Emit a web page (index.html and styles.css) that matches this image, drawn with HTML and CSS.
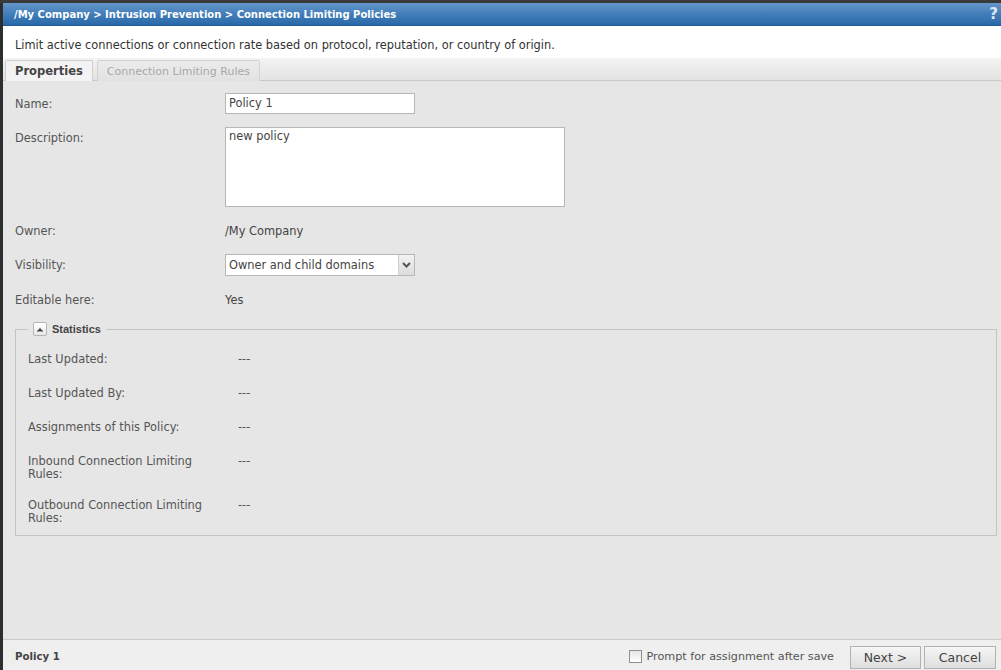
FILE: index.html
```html
<!DOCTYPE html>
<html>
<head>
<meta charset="utf-8">
<link rel="stylesheet" href="styles.css">
</head>
<body>
<div class="frame">
  <div class="topstrip"></div>
  <div class="dialog">
    <div class="titlebar">
      <span class="title">/My Company &gt; Intrusion Prevention &gt; Connection Limiting Policies</span>
      <span class="help">?</span>
    </div>
    <div class="intro">Limit active connections or connection rate based on protocol, reputation, or country of origin.</div>
    <div class="tabs">
      <div class="tab active">Properties</div>
      <div class="tab">Connection Limiting Rules</div>
    </div>
    <div class="content">
      <div class="form">
        <div class="row h21">
          <div class="label">Name:</div>
          <div class="input">Policy 1</div>
        </div>
        <div class="row">
          <div class="label">Description:</div>
          <div class="textarea">new policy</div>
        </div>
        <div class="row h21">
          <div class="label">Owner:</div>
          <div class="value">/My Company</div>
        </div>
        <div class="row h22">
          <div class="label">Visibility:</div>
          <div class="select">
            <span class="select-text">Owner and child domains</span>
            <span class="select-btn">
              <svg width="9" height="6" viewBox="0 0 9 6"><path d="M1 1 L4.5 4.5 L8 1" fill="none" stroke="#555" stroke-width="2"/></svg>
            </span>
          </div>
        </div>
        <div class="row h21">
          <div class="label">Editable here:</div>
          <div class="value">Yes</div>
        </div>
      </div>
      <fieldset class="stats">
        <legend class="legend">
          <span class="toggle"><svg width="8" height="5" viewBox="0 0 8 5"><path d="M0.5 4.5 L4 1 L7.5 4.5 Z" fill="#444"/></svg></span>
          <span class="legend-text">Statistics</span>
        </legend>
        <div class="stat-row">
          <div class="stat-label">Last Updated:</div>
          <div class="stat-value">---</div>
        </div>
        <div class="stat-row">
          <div class="stat-label">Last Updated By:</div>
          <div class="stat-value">---</div>
        </div>
        <div class="stat-row">
          <div class="stat-label">Assignments of this Policy:</div>
          <div class="stat-value">---</div>
        </div>
        <div class="stat-row">
          <div class="stat-label">Inbound Connection Limiting Rules:</div>
          <div class="stat-value">---</div>
        </div>
        <div class="stat-row">
          <div class="stat-label">Outbound Connection Limiting Rules:</div>
          <div class="stat-value">---</div>
        </div>
      </fieldset>
    </div>
    <div class="footer">
      <div class="footer-name">Policy 1</div>
      <label class="prompt"><span class="checkbox"></span>Prompt for assignment after save</label>
      <div class="btn next">Next &gt;</div>
      <div class="btn cancel">Cancel</div>
    </div>
  </div>
</div>
</body>
</html>
```

FILE: styles.css
```css
* { box-sizing: border-box; }
html, body {
  margin: 0;
  padding: 0;
  height: 100%;
  overflow: hidden;
}
body {
  background: #2e2e2e;
  font-family: "DejaVu Sans", Verdana, sans-serif;
  font-size: 11.4px;
  color: #444;
}
.frame {
  height: 670px;
  display: flex;
  flex-direction: column;
}
.topstrip {
  height: 3px;
  background: #3a3a3a;
  flex: none;
}
.dialog {
  flex: 1;
  margin-left: 3px;
  display: flex;
  flex-direction: column;
  background: #e6e6e6;
  min-height: 0;
}
.titlebar {
  height: 23px;
  flex: none;
  background: linear-gradient(#6596c9, #3f7bb8 55%, #2a69a8);
  display: flex;
  align-items: center;
  justify-content: space-between;
  padding: 0 3px 0 11px;
  border-bottom: 1px solid #1f5a94;
}
.title {
  color: #fff;
  font-weight: bold;
  font-size: 10px;
}
.help {
  color: #dfe8f2;
  font-weight: bold;
  font-size: 15px;
  line-height: 1;
}
.intro {
  height: 32px;
  flex: none;
  background: #fff;
  padding: 12px 0 0 12px;
  color: #333;
  line-height: 14px;
}
.tabs {
  height: 23px;
  flex: none;
  background: linear-gradient(#f3f3f3, #e3e3e3);
  border-bottom: 1px solid #c9c9c9;
  display: flex;
  align-items: flex-end;
  padding-left: 2px;
  gap: 4px;
}
.tab {
  height: 21px;
  margin-bottom: -1px;
  padding: 0 9px;
  display: flex;
  align-items: center;
  border: 1px solid #d2d2d2;
  border-bottom: none;
  border-radius: 2px 2px 0 0;
  background: linear-gradient(#ececec, #e2e2e2);
  color: #a8a8a8;
  font-size: 11px;
}
.tab.active {
  background: #f3f3f3;
  border-color: #cfcfcf;
  color: #444;
  font-weight: bold;
  font-size: 11.5px;
}
.content {
  flex: 1;
  padding: 12px 4px 0 12px;
  min-height: 0;
}
.form {
  display: flex;
  flex-direction: column;
  gap: 13px;
}
.row {
  display: grid;
  grid-template-columns: 210px auto;
  align-items: start;
}
.label {
  color: #555;
  line-height: 20px;
  padding-top: 1px;
}
.h22 .label { line-height: 22px; padding-top: 0; }
.value {
  line-height: 20px;
  padding-top: 1px;
  color: #444;
}
.input {
  width: 190px;
  height: 21px;
  background: #fff;
  border: 1px solid #b7b7b7;
  padding: 0 3px;
  line-height: 19px;
  color: #444;
}
.textarea {
  width: 340px;
  height: 80px;
  background: #fff;
  border: 1px solid #b7b7b7;
  padding: 1px 3px;
  line-height: 15px;
  color: #444;
}
.select {
  width: 190px;
  height: 22px;
  background: #fff;
  border: 1px solid #b7b7b7;
  display: flex;
  align-items: stretch;
}
.select-text {
  flex: 1;
  padding-left: 3px;
  line-height: 20px;
  color: #444;
}
.select-btn {
  width: 16px;
  border-left: 1px solid #cfcfcf;
  background: linear-gradient(#f2f2f2, #dcdcdc);
  display: flex;
  align-items: center;
  justify-content: center;
}
.stats {
  margin: 12px 0 0 0;
  padding: 6px 0 3px 12px;
  border: 1px solid #c4c4c4;
  min-width: 0;
}
.legend {
  padding: 0 5px;
  display: flex;
  align-items: center;
  gap: 5px;
  height: 14px;
}
.toggle {
  width: 14px;
  height: 14px;
  border: 1px solid #b5b5b5;
  border-radius: 2px;
  background: linear-gradient(#ffffff, #e8e8e8);
  display: flex;
  align-items: center;
  justify-content: center;
}
.legend-text {
  font-family: "Liberation Sans", Arial, sans-serif;
  font-weight: bold;
  color: #444;
  font-size: 11px;
}
.stat-row {
  display: grid;
  grid-template-columns: 210px auto;
  padding: 11px 0 7px;
  min-height: 34px;
}
.stat-label {
  color: #555;
  line-height: 13px;
  max-width: 185px;
}
.stat-value {
  line-height: 13px;
  color: #555;
}
.footer {
  height: 31px;
  flex: none;
  background: #efefef;
  border-top: 1px solid #cacaca;
  display: flex;
  align-items: center;
  padding: 0 5px 0 12px;
}
.footer-name {
  font-weight: bold;
  font-size: 10.2px;
  color: #444;
  flex: 1;
  padding-top: 3px;
}
.prompt {
  display: flex;
  align-items: center;
  color: #555;
  font-size: 11.2px;
  margin-right: 16px;
  padding-top: 3px;
}
.checkbox {
  width: 13px;
  height: 13px;
  border: 1px solid #8f8f8f;
  background: linear-gradient(#e6e6e6, #ffffff);
  margin-right: 5px;
}
.btn {
  height: 23px;
  margin-top: 5px;
  border: 1px solid #b2b2b2;
  background: linear-gradient(#f5f5f5, #dedede);
  color: #444;
  font-size: 12.5px;
  display: flex;
  align-items: center;
  justify-content: center;
}
.next { width: 71px; margin-right: 3px; }
.cancel { width: 72px; }
```
